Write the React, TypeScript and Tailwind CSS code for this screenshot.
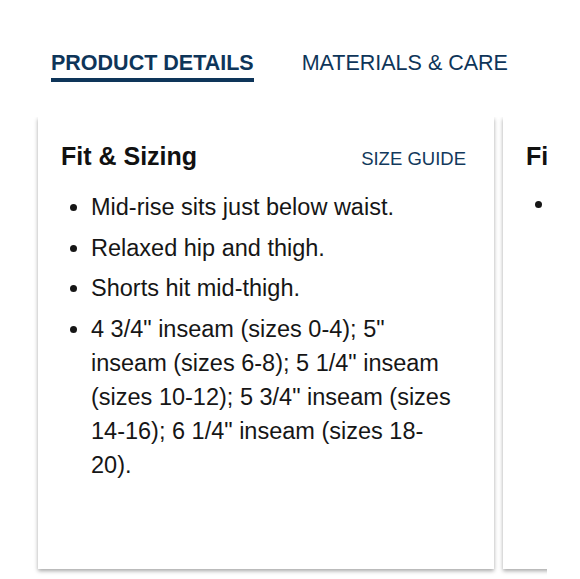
import React from 'react';

const fitItems = [
  'Mid-rise sits just below waist.',
  'Relaxed hip and thigh.',
  'Shorts hit mid-thigh.',
  '4 3/4" inseam (sizes 0-4); 5" inseam (sizes 6-8); 5 1/4" inseam (sizes 10-12); 5 3/4" inseam (sizes 14-16); 6 1/4" inseam (sizes 18-20).'
];

function DetailCard({
  title,
  items,
  showGuide




}: {title: string;items: string[];showGuide?: boolean;}) {
  return (
    <div className="shrink-0 w-[456px] h-[452px] bg-white shadow-[0_2px_4px_rgba(0,0,0,0.35)] pl-[23px] pr-[28px] pt-[25px]">
      <div className="flex items-baseline justify-between">
        <h3 className="text-[25px] leading-[28px] font-bold text-[#111]">{title}</h3>
        {showGuide &&
        <a href="#" className="text-[18.5px] leading-[28px] text-[#12395c] uppercase">
            Size Guide
          </a>
        }
      </div>
      <ul className="mt-[17px] list-disc pl-[30px] pr-[8px] text-[23.5px] leading-[34px] text-[#161616] space-y-[6.5px]">
        {items.map((item) =>
        <li key={item}>{item}</li>
        )}
      </ul>
    </div>);

}

export default function App() {
  return (
    <div className="w-[580px] h-[579px] bg-white overflow-hidden font-['Liberation_Sans',Arial,sans-serif]">
      <div className="flex gap-[48px] pl-[51px] pt-[49px]">
        <button className="text-[21.5px] leading-[28px] font-bold text-[#0e3559] uppercase border-b-4 border-[#0e3559] pb-[1px]">
          Product Details
        </button>
        <button className="text-[21.5px] leading-[28px] text-[#0e3559] uppercase pb-[5px]">
          Materials &amp; Care
        </button>
      </div>
      <div className="mt-[35px] w-[547px] overflow-hidden">
        <div className="flex gap-[9px] pl-[38px] pb-[8px]">
          <DetailCard title="Fit & Sizing" items={fitItems} showGuide />
          <DetailCard
            title="Finishing Details"
            items={['Clean-finished hems with a soft, washed feel throughout.']} />
          
        </div>
      </div>
    </div>);

}
